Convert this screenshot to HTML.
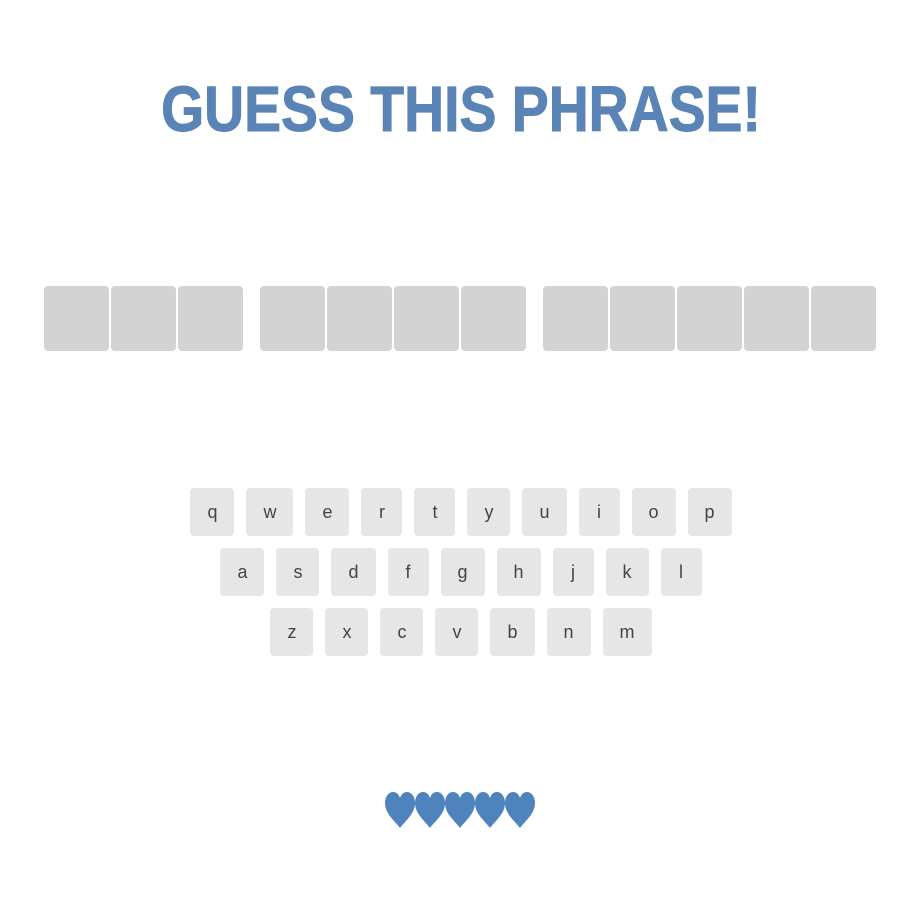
<!DOCTYPE html>
<html><head><style>
body{margin:0;width:922px;height:921px;background:#fff;font-family:"Liberation Sans",sans-serif;position:relative;overflow:hidden}
h1{position:absolute;top:72px;left:0;width:922px;text-align:center;margin:0;font-size:64px;font-weight:bold;color:#5a84b5;transform:scaleX(0.865);-webkit-text-stroke:1px #5a84b5}
.b{position:absolute;top:286px;width:65px;height:65px;background:#d3d3d3;border-radius:4px}
.row{position:absolute;left:0;width:922px;text-align:center;font-size:0}
.k{display:inline-block;height:48px;line-height:48px;margin:0 6px;padding:0 17px;background:#e6e6e6;border-radius:4px;font-size:18px;color:#444;vertical-align:top;min-width:7px}
.h{position:absolute;top:792px;left:385px}
</style></head><body>
<h1>GUESS THIS PHRASE!</h1>
<div class="b" style="left:44px"></div><div class="b" style="left:111px"></div><div class="b" style="left:178px"></div>
<div class="b" style="left:260px"></div><div class="b" style="left:327px"></div><div class="b" style="left:394px"></div><div class="b" style="left:461px"></div>
<div class="b" style="left:543px"></div><div class="b" style="left:610px"></div><div class="b" style="left:677px"></div><div class="b" style="left:744px"></div><div class="b" style="left:811px"></div>
<div class="row" style="top:488px"><span class="k">q</span><span class="k">w</span><span class="k">e</span><span class="k">r</span><span class="k">t</span><span class="k">y</span><span class="k">u</span><span class="k">i</span><span class="k">o</span><span class="k">p</span></div>
<div class="row" style="top:548px"><span class="k">a</span><span class="k">s</span><span class="k">d</span><span class="k">f</span><span class="k">g</span><span class="k">h</span><span class="k">j</span><span class="k">k</span><span class="k">l</span></div>
<div class="row" style="top:608px"><span class="k">z</span><span class="k">x</span><span class="k">c</span><span class="k">v</span><span class="k">b</span><span class="k">n</span><span class="k">m</span></div>
<svg class="h" width="152" height="38" viewBox="0 0 152 38">
<defs><path id="hh" d="M15 36 C10 29 0 22 0 11 C0 4 4 0 8 0 C12 0 14 3 15 6 C16 3 18 0 22 0 C26 0 30 4 30 11 C30 22 20 29 15 36Z"/></defs>
<g fill="#4f83bd"><use href="#hh" x="0"/><use href="#hh" x="30"/><use href="#hh" x="60"/><use href="#hh" x="90"/><use href="#hh" x="120"/></g>
</svg>
</body></html>
